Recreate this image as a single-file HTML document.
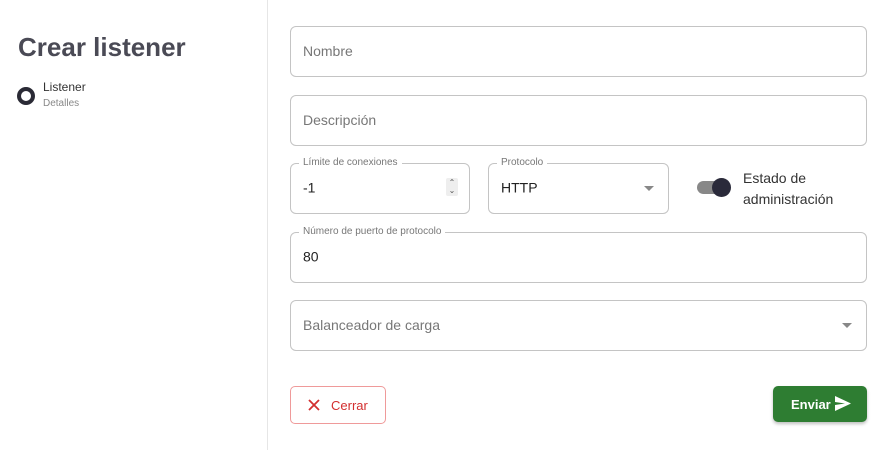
<!DOCTYPE html>
<html><head><meta charset="utf-8"><style>
*{box-sizing:border-box;margin:0;padding:0}
body{width:885px;height:450px;background:#fff;font-family:"Liberation Sans",sans-serif;position:relative;overflow:hidden;color:#333}
.a{position:absolute}
.box{position:absolute;border:1px solid #c4c4c4;border-radius:6px}
.ph{position:absolute;left:12px;top:50%;transform:translateY(-55%);font-size:14px;color:#777}
.val{position:absolute;left:12px;top:50%;transform:translateY(-60%);font-size:14px;color:#222}
.lbl{position:absolute;top:-7px;left:8px;background:#fff;padding:0 4px;font-size:10px;color:#777;line-height:12px}
.arrow{position:absolute;right:14px;top:50%;margin-top:-3px;width:0;height:0;border-left:5px solid transparent;border-right:5px solid transparent;border-top:5px solid #888}
</style></head><body>
<div class="a" style="left:267px;top:0;width:1px;height:450px;background:#e6e6e6"></div>
<div class="a" style="left:18px;top:32px;font-size:26px;font-weight:bold;color:#4a4a55">Crear listener</div>
<div class="a" style="left:17px;top:87px;width:18px;height:18px;border:4px solid #2a2a35;border-radius:50%"></div>
<div class="a" style="left:43px;top:80px;font-size:12px;color:#333">Listener</div>
<div class="a" style="left:43px;top:98px;font-size:10px;color:#888">Detalles</div>

<div class="box" style="left:290px;top:26px;width:577px;height:51px"><span class="ph">Nombre</span></div>
<div class="box" style="left:290px;top:95px;width:577px;height:51px"><span class="ph">Descripción</span></div>
<div class="box" style="left:290px;top:163px;width:180px;height:51px"><span class="lbl">Límite de conexiones</span><span class="val">-1</span>
<div class="a" style="right:11px;top:14px;width:12px;height:18px;background:#eee;border-radius:2px;font-size:8px;line-height:8px;text-align:center;color:#555;padding-top:1px">⌃<br>⌄</div></div>
<div class="box" style="left:488px;top:163px;width:181px;height:51px"><span class="lbl">Protocolo</span><span class="val">HTTP</span><span class="arrow"></span></div>
<div class="a" style="left:697px;top:181px;width:30px;height:13px;background:#888;border-radius:7px"></div>
<div class="a" style="left:712px;top:178px;width:19px;height:19px;background:#2a2a3a;border-radius:50%"></div>
<div class="a" style="left:743px;top:168px;font-size:14px;line-height:21px;color:#333">Estado de<br>administración</div>
<div class="box" style="left:290px;top:232px;width:577px;height:51px"><span class="lbl">Número de puerto de protocolo</span><span class="val">80</span></div>
<div class="box" style="left:290px;top:300px;width:577px;height:51px"><span class="ph">Balanceador de carga</span><span class="arrow"></span></div>

<div class="a" style="left:290px;top:386px;width:96px;height:38px;border:1px solid #ef9a9a;border-radius:5px;color:#d32f2f;font-size:13px">
<svg class="a" style="left:17px;top:12px" width="12" height="12" viewBox="0 0 12 12"><path d="M1 1L11 11M11 1L1 11" stroke="#d32f2f" stroke-width="1.8"/></svg>
<span class="a" style="left:40px;top:11px">Cerrar</span></div>
<div class="a" style="left:773px;top:386px;width:94px;height:36px;background:#2e7d32;border-radius:5px;box-shadow:0 2px 3px rgba(0,0,0,.25);color:#fff;font-size:13px;font-weight:bold">
<span class="a" style="left:18px;top:11px">Enviar</span>
<svg class="a" style="left:62px;top:10px" width="16" height="15" viewBox="0 0 16 15"><path d="M0 0L16 7.5L0 15L0 9L10 7.5L0 6Z" fill="#fff"/></svg></div>
</body></html>
